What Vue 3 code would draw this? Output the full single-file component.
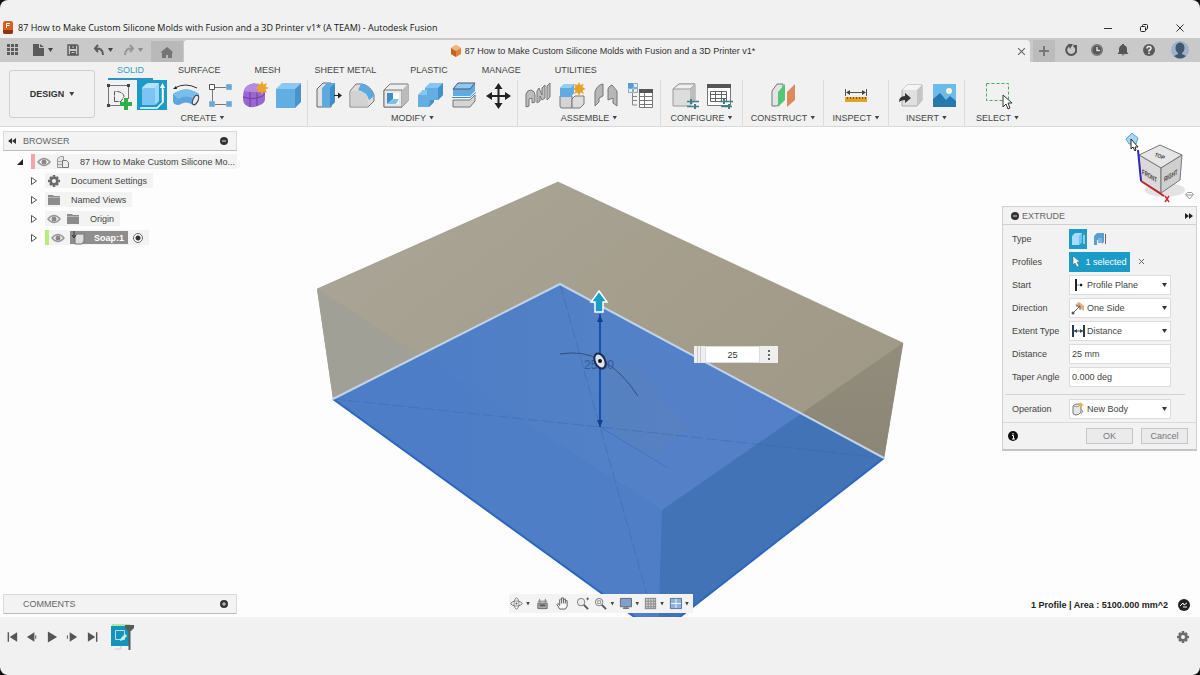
<script setup>
import { ref } from 'vue'

const tabs = ['SOLID', 'SURFACE', 'MESH', 'SHEET METAL', 'PLASTIC', 'MANAGE', 'UTILITIES']
const activeTab = ref('SOLID')

const box = (x, y, s, d, front, top, side) =>
  `<path d="M${x} ${y + d}l${d} ${-d}h${s}l${-d} ${d}z" fill="${top}"/><path d="M${x} ${y + d}h${s}v${s}h${-s}z" fill="${front}"/><path d="M${x + s} ${y + d}l${d} ${-d}v${s}l${-d} ${d}z" fill="${side}"/>`

const groups = [
  {
    id: 'create', label: 'CREATE', tools: [
      { name: 'Create Sketch', art: '<path d="M6 5.500h19M5.500 6v19M25.500 6v13M6 25.500h12" stroke="#777" fill="none"/><path d="M11.500 21.500V11.500h3q6 1 6.500 5l-3 5z" fill="none" stroke="#555" stroke-dasharray="5 1"/><g fill="#444"><path d="M4 4h3v3H4zM24 4h3v3h-3zM4 24h3v3H4z"/></g><path d="M21 18h4v4h4v4h-4v4h-4v-4h-4v-4h4z" fill="#2fae49"/>' },
      { name: 'Extrude', active: true, art: '<path d="M3 28h17l6-6V9" fill="none" stroke="#fff" stroke-width="1.500"/><path d="M5 9q0-2 2-3l2-2q2-1 4-1h9v18l-3 3q-1 1-3 1H5z" fill="#7cc4f4"/><path d="M5 9q0-2 2-3l2-2q2-1 4-1h9l-4 5H9q-3 0-4 1z" fill="#b6e2fb"/><path d="M18 8l4-5v18l-4 4z" fill="#9fd5f8"/><path d="M25.500 21V6" stroke="#fff" stroke-width="1.500"/><path d="M23 8l2.500-5L28 8z" fill="#fff"/>' },
      { name: 'Revolve', art: '<path d="M2 14q13-9 26 0v6q-3 7-6 5-7-5-14 0Q2 25 2 21z" fill="#5ba6dc"/><path d="M2 14q13-9 26 0l-5 5q-8-5-16 0z" fill="#79bdea"/><ellipse cx="24.500" cy="20" rx="2.500" ry="5" transform="rotate(25 24.500 20)" fill="#e8e8e8" stroke="#444"/><path d="M4 8q10-6 22 0" fill="none" stroke="#333"/><path d="M2 9l3-3 1 3z" fill="#222"/>' },
      { name: 'Rectangular Pattern', art: '<path d="M10 7.500h11M7.500 10v11M10 24.500h11" stroke="#777" fill="none"/><path d="M4.500 4.500h5v5h-5z" fill="#fff" stroke="#555"/><g fill="#63a9dc" stroke="#8fb4cf"><path d="M21.500 4.500h5v5h-5zM4.500 21.500h5v5h-5zM21.500 21.500h5v5h-5z"/></g>' },
      { name: 'Create Form', art: '<path d="M7 7q5-5 12-3 7 1 7 5v10q0 4-5 6-8 4-13 1-4-2-4-8 0-8 3-11z" fill="#9a67cf"/><path d="M7 7q5-5 12-3 5 1 6 4-2 3-7 4-9 0-13-1z" fill="#b58ae0"/><path d="M4 17q8 3 14 1 5-1 8-4M11 12v15M18 12v14" stroke="#6c3ca6" fill="none"/><path d="M23 1l1.500 3.500L28 3l-1.500 3.500L30 8l-3.500 1.500L28 13l-3.500-1.500L23 15l-1.500-3.500L18 13l1.500-3.500L16 8l3.500-1.500L18 3l3.500 1.500z" fill="#eba52d"/>' },
      { name: 'Derive', art: box(3, 3, 19, 6, '#62aee3', '#8cc9f0', '#4a92c8') },
    ],
  },
  {
    id: 'modify', label: 'MODIFY', tools: [
      { name: 'Press Pull', art: '<path d="M4 27V9l6-6h8v24z" fill="#e2e2e2" stroke="#666"/><path d="M9 27V8l5-5h8v19l-5 5z" fill="#5eaadf"/><path d="M17 27V8l5-5v19z" fill="#3f8dc4"/><path d="M21 15.500h6" stroke="#222"/><path d="M25 12.500l4 3-4 3z" fill="#222"/>' },
      { name: 'Fillet', art: '<path d="M3 27V11l6-7h6q9 2 12 11v6l-6 6z" fill="#dcdcdc" stroke="#777"/><path d="M14 4q9 0 13 12l-5 4Q20 12 11 10z" fill="#5ba9df"/><path d="M3.500 11h8q8 1 9.500 9v6.500H3.500z" fill="#d2d2d2"/>' },
      { name: 'Shell', art: '<path d="M3 10l6-6h18v17l-6 6H3z" fill="#eee" stroke="#777"/><path d="M3 10h18v17H3z" fill="#e8e8e8" stroke="#777"/><path d="M21 10l6-6v17l-6 6z" fill="#bbb"/><path d="M6 13h12v11H6z" fill="#fff"/><path d="M6 13h6v6l-6 5z" fill="#3f8dc4"/><path d="M12 19h6l-3 5H6z" fill="#7cc0ee"/>' },
      { name: 'Combine', art: '<path d="M10 8l5-5h13v12l-5 5h-4v2l-5 5H3V15l5-5h2z" fill="#64aee2"/><path d="M10 8l5-5h13l-5 5zM3 15l5-5h4v5z" fill="#86c6f0"/><path d="M23 8l5-5v12l-5 5zM15 20h4v2l-5 5z" fill="#4490c8"/>' },
      { name: 'Split Body', art: '<path d="M4 9l5-6h17v8l-5 5H4z" fill="#5fabe0"/><path d="M4 9l5-6h17l-5 6z" fill="#8ccaf2" stroke="#556"/><path d="M3 17.500h18l6-5" fill="none" stroke="#3d8fc9"/><path d="M4 20h17l5-5v6l-5 6H4z" fill="#d5d5d5" stroke="#777"/>' },
      { name: 'Move', art: '<path d="M15.500 6v20M5 16h21" stroke="#222" stroke-width="2"/><path d="M15.500 3l4 6h-8zM15.500 29l4-6h-8zM3 16l6-4v8zM28 16l-6-4v8z" fill="#222"/>' },
    ],
  },
  {
    id: 'assemble', label: 'ASSEMBLE', tools: [
      { name: 'Joint', art: '<g fill="#bdbdbd" stroke="#777"><path d="M3 27V14q1-4 5-4 4 1 4 5v7l-3 1v-5l-3 1v7z"/><path d="M14 23V11l2-3 3 7V8l3-3v13l-3 2-2-4v5z"/><path d="M24 20V6l3-3v14z"/></g>' },
      { name: 'New Component', art: '<path d="M3 16h12v12H5q-2 0-2-2z" fill="#d4d4d4" stroke="#777"/><path d="M15 19l3-3h9v8l-4 4h-8z" fill="#ddd" stroke="#777"/><path d="M3 8l4-4h10v9l-3 4H3z" fill="#60ace2"/><path d="M3 8l4-4h10l-3 4z" fill="#93cef3"/><path d="M22 2l1.500 3L27 4l-1.500 3 3 2-3 1.500L27 14l-3.500-1.500L22 16l-1.500-3.500L17 14l1.500-3.500L16 9l2.500-2L17 4l3.500 1z" fill="#e6a32c"/>' },
      { name: 'As-built Joint', art: '<g fill="#b7b7b7" stroke="#777"><path d="M4 26V12q2-7 8-8v12l-4 2v4z"/><path d="M17 20V9q1-3 4-4l5 6v15l-4-3v-5z"/></g>' },
      { name: 'Bill of Materials', art: '<path d="M3 3h5v5H3z" fill="#4f9fd8"/><path d="M8.500 3.500h4v4h-4zM3.500 8.500h4v4h-4zM8.500 8.500h4v4h-4z" fill="#dfeefa" stroke="#8ab"/><path d="M7.500 13v12H12M8 20.500h4M8 16.500h4" fill="none" stroke="#888"/><path d="M14.500 9.500h13v18h-13z" fill="#fff" stroke="#777"/><path d="M14 9h14v4H14z" fill="#555"/><path d="M14 16.500h14M14 20.500h14M14 24.500h14M19.500 13v14" stroke="#777"/>' },
    ],
  },
  {
    id: 'configure', label: 'CONFIGURE', tools: [
      { name: 'Configure', art: '<path d="M3 9l6-5h16v16l-5 6H3z" fill="#ddd" stroke="#999"/><path d="M3 9l6-5h16l-5 5z" fill="#f0f0f0" stroke="#999"/><path d="M20 9l5-5v16l-5 6z" fill="#bdbdbd"/><path d="M17 21.500h12M17 26.500h12" stroke="#3f7f86" stroke-width="1.500"/><path d="M21 19v5M25 24v5" stroke="#3f7f86" stroke-width="2"/>' },
      { name: 'Configuration Table', art: '<path d="M3.500 4.500h23v21h-23z" fill="#fff" stroke="#777"/><path d="M3 4h24v4H3z" fill="#555"/><path d="M6.500 11.500h16v10h-16zM6 14.500h17M6 18.500h17M11.500 11v11M17.500 11v11" fill="none" stroke="#666"/><path d="M16 21.500h13M17 26.500h11" stroke="#3f7f86" stroke-width="1.500"/><path d="M20 19v5M25 24v5" stroke="#3f7f86" stroke-width="2"/>' },
    ],
  },
  {
    id: 'construct', label: 'CONSTRUCT', tools: [
      { name: 'Offset Plane', art: '<path d="M4 26V11l5-7h6v15l-6 7z" fill="#e4e4e4" stroke="#777"/><path d="M10 27V12l7-8v16z" fill="#53c777"/><path d="M19 27V12l8-8v16z" fill="#dc8a5b"/>' },
    ],
  },
  {
    id: 'inspect', label: 'INSPECT', tools: [
      { name: 'Measure', art: '<path d="M4.500 9v7M25.500 9v7M6 12.500h18" stroke="#555" fill="none"/><path d="M5 12.500l4-2.500v5zM25 12.500l-4-2.500v5z" fill="#444"/><path d="M4 17h22v5H4z" fill="#dda429"/><path d="M6.500 17v2M9.500 17v2M12.500 17v2M15.500 17v2M18.500 17v2M21.500 17v2M24.500 17v2" stroke="#7a5a14"/>' },
    ],
  },
  {
    id: 'insert', label: 'INSERT', tools: [
      { name: 'Insert Derive', art: '<path d="M7 10l5-5h15v15l-5 6H7z" fill="#e0e0e0" stroke="#aaa"/><path d="M7 10l5-5h15l-5 5z" fill="#f4f4f4"/><path d="M22 10l5-5v15l-5 6z" fill="#c5c5c5"/><path d="M4 22q0-6 6-6v-3l6 5-6 5v-3q-4 0-6 2z" fill="#333"/>' },
      { name: 'Decal', art: '<path d="M4 4h23v23H4z" fill="#6dbbea"/><circle cx="20" cy="11" r="3" fill="#fff6d6"/><path d="M4 19l7-6 6 7 4-4 6 5v6H4z" fill="#2779ab"/>' },
    ],
  },
  {
    id: 'select', label: 'SELECT', tools: [
      { name: 'Select', art: '<path d="M3.500 3.500h22v17h-22z" fill="none" stroke="#4fa563" stroke-dasharray="3 2"/><path d="M20 15v12l3-3 2 5 2-1-2-5h4z" fill="#fff" stroke="#333"/>' },
    ],
  },
]

const eye = '<path d="M1 7q6-7 12 0-6 7-12 0z" fill="none" stroke="#999" stroke-width="1.500"/><circle cx="7" cy="7" r="2.500" fill="#888"/>'
const folder = '<path d="M1 2h5l1 1h6v9H1z" fill="#8c8c8c"/><path d="M1 4.500h12" stroke="#b5b5b5"/>'
const gear = '<path d="M7 1v12M1 7h12M3 3l8 8M11 3l-8 8" stroke="#6c6c6c" stroke-width="2.500"/><circle cx="7" cy="7" r="4.500" fill="#6c6c6c"/><circle cx="7" cy="7" r="2" fill="#f3f3f3"/>'
const tree = [
  { label: 'Document Settings', icons: [gear] },
  { label: 'Named Views', icons: [folder] },
  { label: 'Origin', icons: [eye, folder] },
]

const start = ref('Profile Plane')
const direction = ref('One Side')
const extent = ref('Distance')
const distance = ref('25 mm')
const taper = ref('0.000 deg')
const operation = ref('New Body')
const offset = ref('25')

const transport = [
  { name: 'Go to start', art: '<path d="M2.500 2v10" stroke="#555" stroke-width="1.500"/><path d="M12 2v10L4 7z" fill="#555"/>' },
  { name: 'Step back', art: '<path d="M9 2v10L1 7z" fill="#555"/><path d="M10 5h1v4h-1z" fill="#555"/>' },
  { name: 'Play', art: '<path d="M2 1v12l10-6z" fill="#555"/>' },
  { name: 'Step forward', art: '<path d="M4 2v10l8-5z" fill="#555"/><path d="M1 5h1v4H1z" fill="#555"/>' },
  { name: 'Go to end', art: '<path d="M2 2v10l8-5z" fill="#555"/><path d="M11.500 2v10" stroke="#555" stroke-width="1.500"/>' },
]

const nav = [
  { name: 'Orbit', caret: true, art: '<ellipse cx="7" cy="7" rx="6" ry="2.500" fill="none" stroke="#666"/><ellipse cx="7" cy="7" rx="2.500" ry="6" fill="none" stroke="#777"/><path d="M5 5h4v4H5z" fill="#f4f4f4"/><path d="M7 6v2M6 7h2" stroke="#555"/>' },
  { name: 'Look At', art: '<path d="M2 6.500h10v6H2z" fill="#aaa" stroke="#666"/><path d="M4 9h6" stroke="#555" stroke-width="2"/><path d="M2 4.500h10M4 2v4M10 2v4" stroke="#777" fill="none"/>' },
  { name: 'Pan', art: '<path d="M4 13L1 8l1-1 2 2V3l1-1 1 1V1h2v2l2-1v2h2v6l-2 3z" fill="#fafafa" stroke="#555"/><path d="M6 3v4M8 3v4M10 4v3" stroke="#555"/>' },
  { name: 'Zoom', art: '<circle cx="5.500" cy="5.500" r="4" fill="#eee" stroke="#777"/><path d="M8.500 8.500l4.500 4.500" stroke="#555" stroke-width="2"/><path d="M11 2h3M12.500 .5v3" stroke="#555"/>' },
  { name: 'Fit', caret: true, art: '<circle cx="5.500" cy="5.500" r="4" fill="#eee" stroke="#777"/><path d="M4 4h3v3H4z" fill="none" stroke="#999"/><path d="M8.500 8.500l4.500 4.500" stroke="#555" stroke-width="2"/>' },
  { name: 'Display Settings', caret: true, art: '<path d="M1.500 1.500h12v9h-12z" fill="#7e9fd0" stroke="#666"/><path d="M5 11h5l1 2H4z" fill="#777"/>' },
  { name: 'Grid and Snaps', caret: true, art: '<path d="M1 1h12v12H1z" fill="#d5d5d5"/><path d="M1 1.500h12M1 4.500h12M1 7.500h12M1 10.500h12M1.500 1v12M4.500 1v12M7.500 1v12M10.500 1v12M12.500 1v12M1 12.500h12" stroke="#888"/>' },
  { name: 'Viewports', caret: true, art: '<path d="M1.500 1.500h12v11h-12z" fill="#8fb0dc" stroke="#556f99"/><path d="M7.500 2v10M2 7h11" stroke="#f4f7fb"/>' },
]
</script>

<template>
  <div class="window">
    <header class="titlebar">
      <svg class="app-icon" viewBox="0 0 10 13"><rect width="10" height="13" rx="2" fill="#d9601c" /><path d="M0 9h10v2q0 2-2 2H2q-2 0-2-2z" fill="#8d3510" /><path d="M3.500 7V2.500H7M3.500 4.500h3" stroke="#fff" fill="none" /></svg>
      <h1>87 How to Make Custom Silicone Molds with Fusion and a 3D Printer v1* (A TEAM) - Autodesk Fusion</h1>
      <div class="window-buttons">
        <button aria-label="Minimize"><svg viewBox="0 0 10 10"><path d="M1 5.500h8" stroke="#333" /></svg></button>
        <button aria-label="Restore"><svg viewBox="0 0 10 10"><rect x="1.500" y="3.500" width="5" height="5" rx="1" fill="none" stroke="#222" /><path d="M3.500 3.500v-1q0-1 1-1h3q1 0 1 1v3q0 1-2 1" fill="none" stroke="#222" /></svg></button>
        <button aria-label="Close"><svg viewBox="0 0 10 10"><path d="M1.500 1.500l7 7M8.500 1.500l-7 7" stroke="#333" /></svg></button>
      </div>
    </header>

    <nav class="tabbar">
      <div class="quick">
        <button aria-label="Data panel"><svg viewBox="0 0 12 12"><path d="M0 0h3v3H0zM4 0h3v3H4zM8 0h3v3H8zM0 4h3v3H0zM4 4h3v3H4zM8 4h3v3H8zM0 8h3v3H0zM4 8h3v3H4zM8 8h3v3H8z" fill="#5c5c5c" /></svg></button>
        <button aria-label="File"><svg viewBox="0 0 12 12"><path d="M0 0h6v4h5v8H0z" fill="#5a5a5a" /><path d="M7 0l4 3H7z" fill="#5a5a5a" /></svg><i class="caret"></i></button>
        <button aria-label="Save"><svg viewBox="0 0 12 12"><path d="M1 1h9l1 1v9H1z" fill="none" stroke="#5a5a5a" stroke-width="1.500" /><path d="M3 1h6v4H3zM3 7h6v4H3z" fill="#5a5a5a" /><path d="M4.500 8.500h3M5 3h2" stroke="#ccc" /></svg></button>
        <button class="undo" aria-label="Undo"><svg viewBox="0 0 12 12"><path d="M5 1L2 4.500 5 8M2 4.500q8-1 8 6.500" fill="none" stroke="#5c5c5c" stroke-width="2" /></svg><i class="caret"></i></button>
        <button class="muted" aria-label="Redo"><svg viewBox="0 0 12 12"><path d="M7 1l3 3.500L7 8M10 4.500q-8-1-8 6.500" fill="none" stroke="#5c5c5c" stroke-width="2" /></svg><i class="caret"></i></button>
      </div>
      <button class="home" aria-label="Home"><svg viewBox="0 0 12 12"><path d="M0 6l6-5 6 5-1 1v5H7V9H5v3H1V7z" fill="#757575" /></svg></button>
      <div class="doc-tab">
        <span class="doc-name">
          <svg viewBox="0 0 12 12"><path d="M1 3l5-3 5 3v6l-5 3-5-3z" fill="#e08438" /><path d="M1 3l5 3v6l-5-3z" fill="#c9621f" /><path d="M1 3l5-3 5 3-5 3z" fill="#f5b47a" /></svg>
          87 How to Make Custom Silicone Molds with Fusion and a 3D Printer v1*
        </span>
        <button aria-label="Close document"><svg viewBox="0 0 8 8"><path d="M1 1l6 6M7 1L1 7" stroke="#666" /></svg></button>
      </div>
      <div class="account">
        <button class="new" aria-label="New tab"><svg viewBox="0 0 12 12"><path d="M6 1v10M1 6h10" stroke="#777" stroke-width="2" /></svg></button>
        <button aria-label="Extensions"><svg viewBox="0 0 12 12"><path d="M4 1.500A5 5 0 108.500 1.500" fill="none" stroke="#555" stroke-width="2" /><path d="M3 0h5L5 5zM9 1h3v4z" fill="#555" /></svg></button>
        <button aria-label="Job status"><svg viewBox="0 0 12 12"><circle cx="6" cy="6" r="5" fill="#555" stroke="#777" stroke-width="2" /><path d="M6 3v3.500h3" fill="none" stroke="#ddd" stroke-width="1.500" /></svg></button>
        <button aria-label="Notifications"><svg viewBox="0 0 12 12"><path d="M5 0h2v1q3 1 3 4v3l1.500 2h-11L2 8V5q0-3 3-4zM4.500 10.500h3q-1.500 2-3 0z" fill="#555" /></svg></button>
        <button aria-label="Help"><svg viewBox="0 0 12 12"><circle cx="6" cy="6" r="6" fill="#5a5a5a" /><path d="M4 4.500q0-2 2-2t2 2q0 1-2 2v1" fill="none" stroke="#eee" stroke-width="1.500" /><path d="M5.200 8.500h1.600v1.500H5.200z" fill="#eee" /></svg></button>
        <button class="avatar" aria-label="Profile"><svg viewBox="0 0 18 18"><circle cx="9" cy="9" r="9" fill="#9fb2cb" /><ellipse cx="9" cy="7" rx="4.500" ry="5.500" fill="#43566f" /><path d="M7 11h4v2l4 2q-6 5-12 0l4-2z" fill="#43566f" /></svg></button>
      </div>
    </nav>

    <section class="ribbon">
      <button class="workspace">DESIGN <i class="caret"></i></button>
      <div class="ribbon-main">
        <div class="ribbon-tabs" role="tablist">
          <button v-for="t in tabs" :key="t" role="tab" :aria-selected="t === activeTab" :class="{ on: t === activeTab }" @click="activeTab = t">{{ t }}</button>
        </div>
        <div class="groups">
          <div v-for="g in groups" :key="g.id" :class="['group', g.id]">
            <div class="tools">
              <button v-for="tool in g.tools" :key="tool.name" :aria-label="tool.name" :class="{ active: tool.active }"><svg viewBox="0 0 30 30" v-html="tool.art"></svg></button>
            </div>
            <button class="group-label">{{ g.label }} <i class="caret"></i></button>
          </div>
        </div>
      </div>
    </section>

    <main class="canvas">
      <svg class="scene" viewBox="0 127 1200 490" preserveAspectRatio="xMidYMid slice">
        <defs>
          <linearGradient id="lid" x1="0" y1="0" x2="1" y2="1"><stop offset="0" stop-color="#aaa698" /><stop offset=".4" stop-color="#a59e8d" /><stop offset="1" stop-color="#9b9482" /></linearGradient>
          <linearGradient id="end" x1="0" y1="0" x2="0" y2="1"><stop offset="0" stop-color="#928c7c" /><stop offset="1" stop-color="#837d6e" /></linearGradient>
          <linearGradient id="base" x1="0" y1="0" x2="1" y2="0"><stop offset="0" stop-color="#4b7cc5" /><stop offset=".5" stop-color="#5381c7" /><stop offset="1" stop-color="#557fca" /></linearGradient>
          <clipPath id="floor"><path d="M333 399L560 284l324 174-226 176z" /></clipPath>
        </defs>
        <path d="M317 289L558 182l345 161-19 115-226 176-325-235z" fill="url(#lid)" />
        <path d="M317 289l344 222-3 123-325-235z" fill="#a1a096" />
        <path d="M903 343l-19 115-226 176 4-124z" fill="url(#end)" />
        <path d="M333 399L560 284l324 174-226 176z" fill="url(#base)" />
        <g clip-path="url(#floor)">
          <path d="M317 289l345 221-3 130-330-238z" fill="#4d7dc5" opacity=".75" />
          <path d="M903 343L662 510l-4 130 226-176z" fill="#4273b7" />
          <path d="M604 370l30-10 28 35v60l-28-8-30-25zM662 400l28 28-28 20z" fill="#6684a8" opacity=".2" />
        </g>
        <g fill="none" stroke="#3864a8" opacity=".45">
          <path d="M333 399l267 28 284 31M560 284l40 143 58 207" stroke-dasharray="12 3" />
          <path d="M600 427l68 41" />
        </g>
        <path d="M333 399l325 235 226-176" fill="none" stroke="#2d67bd" stroke-width="2" />
        <path d="M333 399L560 284l324 174" fill="none" stroke="#c0d3e8" stroke-width="2" />
        <path d="M317 289L558 182l345 161-19 114" fill="none" stroke="#8f8979" opacity=".5" />
        <text x="584" y="369" font-size="12" fill="#365b96">25.00</text>
        <path d="M600 314v113" stroke="#184fae" stroke-width="2" />
        <path d="M597 322l3-7 3 7zM597 420l3 7 3-7z" fill="#143f8e" />
        <path d="M560 354q45-8 78 42" fill="none" stroke="#334e7b" />
        <ellipse cx="600" cy="361" rx="5" ry="8" transform="rotate(-25 600 361)" fill="#dde4ef" stroke="#1d2c4a" stroke-width="2" />
        <circle cx="600" cy="361" r="2" fill="#111" />
        <path d="M599 291l8 11h-4v10h-8v-10h-4z" fill="#199fc7" stroke="#fff" stroke-width="1.500" />
      </svg>

      <div class="offset-box">
        <span class="grip"></span>
        <input v-model="offset" aria-label="Extrude distance" />
        <button aria-label="More options"><svg viewBox="0 0 4 14"><path d="M1 2h2v2H1zM1 6h2v2H1zM1 10h2v2H1z" fill="#666" /></svg></button>
      </div>

      <aside class="browser">
        <div class="bar">
          <svg viewBox="0 0 10 8"><path d="M5 1v6L1 4zM9 1v6L5 4z" fill="#333" /></svg>
          <span>BROWSER</span>
          <button aria-label="Collapse browser"><svg viewBox="0 0 8 8"><circle cx="4" cy="4" r="4" fill="#333" /><path d="M2 4h4" stroke="#ddd" /></svg></button>
        </div>
        <ul class="tree">
          <li class="root">
            <svg class="twist" viewBox="0 0 8 8"><path d="M7 1v6H1z" fill="#222" /></svg>
            <span class="chip">
              <i class="stripe pink"></i>
              <svg viewBox="0 0 14 14" v-html="eye"></svg>
              <svg viewBox="0 0 14 14"><path d="M1.500 12.500v-9l3-2h3v11z" fill="#e4e4e4" stroke="#999" /><path d="M2 6.500h5M2 9.500h5" stroke="#aaa" /><path d="M6.500 5.500h4l2 2v5h-6z" fill="#eee" stroke="#777" /></svg>
              <span>87 How to Make Custom Silicone Mo...</span>
            </span>
          </li>
          <li v-for="n in tree" :key="n.label">
            <svg class="twist" viewBox="0 0 8 8"><path d="M1.500 .5v7l5-3.500z" fill="#fff" stroke="#555" /></svg>
            <span class="chip">
              <svg v-for="(art, i) in n.icons" :key="i" viewBox="0 0 14 14" v-html="art"></svg>
              <span>{{ n.label }}</span>
            </span>
          </li>
          <li>
            <svg class="twist" viewBox="0 0 8 8"><path d="M1.500 .5v7l5-3.500z" fill="#fff" stroke="#555" /></svg>
            <span class="chip soap">
              <i class="stripe green"></i>
              <svg viewBox="0 0 14 14" v-html="eye"></svg>
              <label for="soap"><svg viewBox="0 0 14 14"><path d="M4 5l2-2h7v7l-2 3H4z" fill="#ddd" stroke="#777" /><path d="M3 0v6M1 4l2 3 2-3" stroke="#333" fill="none" /></svg><b>Soap:1</b></label>
              <input id="soap" type="radio" checked />
            </span>
          </li>
        </ul>
      </aside>

      <svg class="viewcube" viewBox="1120 130 80 76">
        <ellipse cx="1165" cy="190" rx="20" ry="7" fill="#e3e3e3" />
        <path d="M1139 155l21-10 22 10-21 13z" fill="#e6e6e6" stroke="#777" />
        <path d="M1139 155l22 13v25l-20-12z" fill="#d9d9d9" stroke="#777" />
        <path d="M1182 155l-21 13v25l19-13z" fill="#cfcfcf" stroke="#777" />
        <g font-weight="700" fill="#444">
          <text transform="matrix(.8 .3 -.4 .8 1154 156)" font-size="6">TOP</text>
          <text transform="matrix(.72 .42 0 1.200 1142 174)" font-size="6">FRONT</text>
          <text transform="matrix(.72 -.42 0 1.200 1164 182)" font-size="6">RIGHT</text>
        </g>
        <path d="M1138 150l3 31" stroke="#3029b5" stroke-width="2" />
        <path d="M1141 181l23 15" stroke="#c8202d" stroke-width="2" />
        <path d="M1165 196l4 6M1169 196l-4 6" stroke="#d02c38" stroke-width="1.500" />
        <path d="M1132 133l6 5-2 6h-7l-3-5z" fill="#a7d5ef" stroke="#5ba7d0" />
        <path d="M1131 139v10l2-2 2 4 1-1-1-3h3z" fill="#fff" stroke="#222" />
        <path d="M1185.500 194.500l2-2h4l2 2-4 4.500z" fill="#f8f8f8" stroke="#999" /><path d="M1186 195h7" stroke="#999" />
      </svg>

      <form class="extrude" @submit.prevent>
        <div class="panel-head">
          <svg viewBox="0 0 8 8"><circle cx="4" cy="4" r="4" fill="#333" /><path d="M2 4h4" stroke="#ddd" /></svg>
          <span>EXTRUDE</span>
          <svg class="ff" viewBox="0 0 10 8"><path d="M1 1v6l4-3zM5 1v6l4-3z" fill="#222" /></svg>
        </div>
        <div class="fields">
          <span>Type</span>
          <div class="types">
            <button type="button" class="on" aria-label="Extrude"><svg viewBox="0 0 14 14"><path d="M1 4l3-3h7v9l-3 3H1z" fill="#a8dcfa" /><path d="M8 4l3-3v9l-3 3z" fill="#6fc0ee" /><path d="M13 12V3" stroke="#fff" /></svg></button>
            <button type="button" aria-label="Thin extrude"><svg viewBox="0 0 14 14"><path d="M1 4l3-3h7v9l-2 2V8H4v5H1z" fill="#5c9ed0" /><path d="M5 6h4v5H5z" fill="#7fb4dc" /><path d="M12.500 12V2" stroke="#666" /></svg></button>
          </div>
          <span>Profiles</span>
          <div class="profiles">
            <button type="button" class="selected"><svg viewBox="0 0 8 12"><path d="M1 0v9l2-2 2 4 2-1-2-4h3z" fill="#fff" stroke="#456" stroke-width=".5" /></svg>1 selected</button>
            <button type="button" class="clear" aria-label="Clear selection"><svg viewBox="0 0 8 8"><path d="M1 1l5 5M6 1L1 6" stroke="#666" /></svg></button>
          </div>
          <label for="start">Start</label>
          <div class="pick"><svg viewBox="0 0 14 14"><path d="M5 1v12" stroke="#222" stroke-width="2" /><path d="M9 6h2v2H9zM6 7h2" fill="#222" stroke="#222" stroke-width=".5" /></svg><select id="start" v-model="start"><option>Profile Plane</option></select></div>
          <label for="direction">Direction</label>
          <div class="pick"><svg viewBox="0 0 14 14"><path d="M4 4l4-3 5 4v5l-4-3z" fill="#e6aa7c" /><path d="M2 12l7-7M9 5H5M9 5v4" stroke="#666" fill="none" /><circle cx="2" cy="12" r="1.500" fill="#555" /></svg><select id="direction" v-model="direction"><option>One Side</option></select></div>
          <label for="extent">Extent Type</label>
          <div class="pick"><svg viewBox="0 0 14 14"><path d="M2 1v12M13 1v12" stroke="#2a3a4a" stroke-width="2" /><path d="M3 7h9" stroke="#345" /><path d="M3 7l3-2v4zM12 7L9 5v4z" fill="#345" /></svg><select id="extent" v-model="extent"><option>Distance</option></select></div>
          <label for="distance">Distance</label>
          <input id="distance" v-model="distance" />
          <label for="taper">Taper Angle</label>
          <input id="taper" v-model="taper" />
        </div>
        <hr />
        <div class="fields last">
          <label for="operation">Operation</label>
          <div class="pick"><svg viewBox="0 0 14 14"><path d="M2 4q1-2 5-2h3v8q-2 3-5 3t-3-2z" fill="#e6e6e6" stroke="#777" /><path d="M2 4q4 2 8-1M10 8l2 1-2 3" fill="none" stroke="#999" /><path d="M10 0l1 2 2 1-2 1-1 2-1-2-2-1 2-1z" fill="#e6b43c" /></svg><select id="operation" v-model="operation"><option>New Body</option></select></div>
        </div>
        <div class="actions">
          <svg viewBox="0 0 10 10"><circle cx="5" cy="5" r="5" fill="#111" /><path d="M4 4.500h1.500V8M4 8h3M5 2v1.500" stroke="#fff" fill="none" /></svg>
          <button type="submit">OK</button>
          <button type="button">Cancel</button>
        </div>
      </form>

      <div class="bar comments">
        <span>COMMENTS</span>
        <button aria-label="Add comment"><svg viewBox="0 0 8 8"><circle cx="4" cy="4" r="4" fill="#333" /><path d="M2 4h4M4 2v4" stroke="#ddd" /></svg></button>
      </div>

      <div class="navbar">
        <button v-for="n in nav" :key="n.name" :aria-label="n.name" :class="{ plain: !n.caret }"><svg viewBox="0 0 14 14" v-html="n.art"></svg><i v-if="n.caret" class="caret"></i></button>
      </div>

      <div class="status">
        <strong>1 Profile | Area : 5100.000 mm^2</strong>
        <svg viewBox="0 0 12 12"><circle cx="6" cy="6" r="6" fill="#222" /><path d="M2 7l3-3 1 2 3-2M5 8h4" stroke="#fff" fill="none" /></svg>
      </div>
    </main>

    <footer class="timeline">
      <div class="transport">
        <button v-for="t in transport" :key="t.name" :aria-label="t.name"><svg viewBox="0 0 14 14" v-html="t.art"></svg></button>
      </div>
      <button class="feature" aria-label="Sketch feature"><svg viewBox="0 0 26 28"><path d="M2 1h18v6H2z" fill="#a9eca0" /><path d="M1 3h18v20H1z" fill="#1593bd" /><path d="M5.500 7.500h9v9h-9z" fill="none" stroke="#a8e2f4" /><path d="M10 18l1-3 4-4 2 2-4 4z" fill="#c8f0dc" /><path d="M5 26h6v-3" fill="none" stroke="#ccc" /><path d="M15 2h9v3l-3 3h-3l-3-3z" fill="#5a5a5a" /><path d="M19.500 6v21" stroke="#5a5a5a" stroke-width="2" /></svg></button>
      <button class="settings" aria-label="Timeline settings"><svg viewBox="0 0 14 14" v-html="gear"></svg></button>
    </footer>
  </div>
</template>

<style>
body {
  background: #111;
}
</style>

<style scoped>
.window {
  display: flex;
  flex-direction: column;
  min-height: 100vh;
  overflow: hidden;
  border-radius: 8px;
  background: #f1f1f1;
  color: #444;
  font: 9px/12px "Liberation Sans", Arial, sans-serif;
}
.window * {
  box-sizing: border-box;
}
button {
  display: flex;
  align-items: center;
  justify-content: center;
  padding: 0;
  border: 0;
  background: none;
  color: inherit;
  font: inherit;
}
svg {
  display: block;
  flex: none;
}
.caret {
  flex: none;
  width: 5px;
  height: 4px;
  background: #444;
  clip-path: polygon(0 0, 100% 0, 50% 100%);
}

.titlebar {
  display: flex;
  align-items: center;
  height: 38px;
  padding: 17px 15px 0 3px;
}
.app-icon {
  width: 10px;
  height: 13px;
}
.titlebar h1 {
  flex: 1;
  margin: 0 0 0 5px;
  color: #111;
  font: 9px/14px "Open Sans", sans-serif;
}
.window-buttons {
  display: flex;
  gap: 26px;
}
.window-buttons svg {
  width: 10px;
  height: 10px;
}

.tabbar {
  display: flex;
  align-items: flex-end;
  height: 24px;
  background: #c9c9c9;
}
.quick {
  display: flex;
  gap: 14px;
  width: 151px;
  height: 24px;
  padding-left: 7px;
}
.quick button {
  gap: 3px;
}
.quick svg,
.home svg,
.account svg {
  width: 12px;
  height: 12px;
}
.quick .undo {
  margin-right: -4px;
}
.muted {
  opacity: .45;
}
.home {
  width: 32px;
  height: 21px;
  background: #b9b9b9;
}
.doc-tab {
  flex: 1;
  display: flex;
  align-items: center;
  height: 22px;
  margin-left: 1px;
  padding: 0 4px;
  border-radius: 3px 4px 0 0;
  background: #f1f1f1;
}
.doc-name {
  flex: 1;
  display: flex;
  align-items: center;
  justify-content: center;
  gap: 3px;
  color: #333;
}
.doc-name svg {
  width: 12px;
  height: 12px;
}
.doc-tab button svg {
  width: 9px;
  height: 9px;
}
.account {
  display: flex;
  align-items: center;
  gap: 14px;
  height: 22px;
  padding: 0 11px 2px 3px;
}
.account .new {
  width: 22px;
  height: 22px;
  margin: 0 -4px -2px 0;
  background: #bcbcbc;
}
.account .avatar {
  margin-left: 2px;
}
.account .avatar svg {
  width: 18px;
  height: 18px;
}

.ribbon {
  display: flex;
  align-items: flex-start;
  height: 65px;
  border-bottom: 1px solid #d9d9d9;
}
.workspace {
  gap: 5px;
  width: 86px;
  height: 48px;
  margin: 8px 3px 0 9px;
  border: 1px solid #cfcfcf;
  border-radius: 3px;
  color: #333;
  font-weight: 700;
}
.ribbon-main {
  flex: 1;
}
.ribbon-tabs {
  display: flex;
  gap: 16px;
  height: 18px;
  padding-left: 10px;
}
.ribbon-tabs button {
  padding: 0 9px;
  border-bottom: 2px solid transparent;
}
.ribbon-tabs .on {
  border-color: #2b93bd;
  color: #2f9fc9;
}
.groups {
  display: flex;
}
.group {
  display: flex;
  flex-direction: column;
  align-items: center;
  padding-bottom: 2px;
  border-right: 1px solid #dcdcdc;
}
.create,
.modify {
  width: 210px;
}
.assemble {
  width: 143px;
}
.configure {
  width: 82px;
}
.construct {
  width: 81px;
}
.inspect {
  width: 65px;
}
.insert {
  width: 76px;
}
.select {
  width: 65px;
  border: 0;
}
.tools {
  display: flex;
  gap: 4px;
}
.tools svg {
  width: 30px;
  height: 30px;
}
.tools .active {
  background: #1b9bc8;
}
.group-label {
  gap: 3px;
  height: 15px;
}

.canvas {
  position: relative;
  flex: 1;
  overflow: hidden;
  background: #fdfdfd;
}
.scene {
  position: absolute;
  width: 100%;
  height: 100%;
}
.offset-box {
  position: absolute;
  left: calc(50% + 94px);
  top: calc(50% - 26px);
  display: flex;
  width: 84px;
  height: 17px;
  background: #efefef;
}
.grip {
  width: 11px;
  border: 3px solid #efefef;
  border-width: 0 3px;
  background: repeating-linear-gradient(90deg, #ccc 0 1px, #eee 1px 3px);
}
.offset-box input {
  width: 55px;
  border: 1px solid #ddd;
  background: #fff;
  color: #333;
  font: inherit;
  text-align: center;
}
.offset-box button {
  flex: 1;
}
.offset-box svg {
  width: 4px;
  height: 14px;
}

.bar {
  display: flex;
  align-items: center;
  height: 20px;
  padding: 0 8px 0 3px;
  border: 1px solid #dadada;
  border-bottom-color: #bbb;
  background: #f3f3f3;
  color: #666;
}
.bar span {
  flex: 1;
}
.bar > svg {
  width: 10px;
  height: 8px;
  margin-right: 6px;
}
.bar button svg {
  width: 8px;
  height: 8px;
}
.browser {
  position: absolute;
  left: 3px;
  top: 4px;
  width: 234px;
}
.tree {
  margin: 1px 0 0;
  padding: 0;
  list-style: none;
}
.tree li {
  display: flex;
  align-items: center;
  gap: 7px;
  height: 19px;
  padding-left: 27px;
}
.tree .root {
  padding-left: 13px;
}
.twist {
  width: 8px;
  height: 8px;
}
.chip {
  display: flex;
  align-items: center;
  gap: 5px;
  height: 15px;
  padding: 0 6px 0 2px;
  background: #f3f3f3;
}
.root .chip {
  padding-right: 2px;
}
.chip > span {
  margin-left: 5px;
  white-space: nowrap;
}
.chip svg {
  width: 14px;
  height: 14px;
}
.stripe {
  width: 4px;
  height: 15px;
  margin: 0 -3px 0 -2px;
}
.pink {
  background: #f0a4ac;
}
.green {
  background: #b9ed7a;
}
.soap label {
  display: flex;
  align-items: center;
  gap: 9px;
  height: 13px;
  padding: 0 4px 0 1px;
  background: #8e8e8e;
  color: #fff;
}
.soap input {
  appearance: none;
  width: 10px;
  height: 10px;
  margin: 0;
  border: 1px solid #666;
  border-radius: 50%;
  background: radial-gradient(circle, #333 0 2px, #fff 3px);
}

.viewcube {
  position: absolute;
  right: 0;
  top: 3px;
  width: 80px;
  height: 76px;
}

.extrude {
  position: absolute;
  right: 3px;
  top: 79px;
  width: 195px;
  border: 1px solid #d0d0d0;
  border-bottom: 2px solid #c4c4c4;
  background: #f2f2f2;
}
.panel-head {
  display: flex;
  align-items: center;
  gap: 3px;
  height: 18px;
  padding: 0 2px 0 8px;
  border-bottom: 1px solid #d0d0d0;
  color: #666;
}
.panel-head span {
  flex: 1;
}
.panel-head svg {
  width: 8px;
  height: 8px;
}
.panel-head .ff {
  width: 10px;
}
.fields {
  display: grid;
  grid-template-columns: 57px 102px;
  grid-auto-rows: 20px;
  row-gap: 3px;
  align-items: center;
  padding: 4px 0 0 9px;
  white-space: nowrap;
}
.types,
.profiles {
  display: flex;
  height: 20px;
  gap: 4px;
}
.types button {
  width: 18px;
}
.types svg {
  width: 14px;
  height: 14px;
}
.types .on,
.selected {
  background: #1b9bc8;
  color: #fff;
}
.selected {
  gap: 5px;
  width: 61px;
}
.selected svg {
  width: 8px;
  height: 12px;
}
.clear {
  width: 16px;
}
.clear svg {
  width: 8px;
  height: 8px;
}
.fields input,
.pick {
  width: 102px;
  height: 20px;
  border: 1px solid #dcdcdc;
  background: #fff;
  color: #444;
  font: inherit;
}
.fields input {
  padding: 0 2px;
}
.pick {
  position: relative;
}
.pick svg {
  position: absolute;
  left: 1px;
  top: 2px;
  width: 14px;
  height: 14px;
}
.pick::after {
  content: "";
  position: absolute;
  right: 3px;
  top: 7px;
  width: 5px;
  height: 4px;
  background: #333;
  clip-path: polygon(0 0, 100% 0, 50% 100%);
  pointer-events: none;
}
.pick select {
  appearance: none;
  width: 100%;
  height: 100%;
  padding: 0 12px 0 17px;
  border: 0;
  background: none;
  color: inherit;
  font: inherit;
}
.extrude hr {
  margin: 7px 11px 0 2px;
  border: 0;
  border-top: 1px solid #d2d2d2;
}
.actions {
  display: flex;
  align-items: center;
  gap: 8px;
  height: 27px;
  margin-top: 3px;
  padding: 0 8px 0 5px;
  border-top: 1px solid #dadada;
  color: #777;
}
.actions svg {
  width: 10px;
  height: 10px;
  margin-right: auto;
}
.actions button {
  width: 47px;
  height: 16px;
  border: 1px solid #c6c6c6;
  background: #ebebeb;
}

.comments {
  position: absolute;
  left: 3px;
  bottom: 3px;
  width: 234px;
  padding-left: 19px;
}
.navbar {
  position: absolute;
  left: calc(50% - 91px);
  bottom: 4px;
  display: flex;
  align-items: center;
  justify-content: space-between;
  width: 184px;
  height: 19px;
  padding: 0 4px 0 1px;
  background: #f3f3f3;
}
.navbar button {
  gap: 3px;
}
.navbar .plain {
  padding: 0 1px;
}
.navbar svg {
  width: 13px;
  height: 13px;
}
.navbar .caret {
  width: 4px;
}
.status {
  position: absolute;
  right: 10px;
  bottom: 6px;
  display: flex;
  align-items: center;
  gap: 10px;
  color: #222;
}
.status svg {
  width: 12px;
  height: 12px;
}

.timeline {
  display: flex;
  align-items: flex-start;
  height: 58px;
  padding: 6px 10px 0 6px;
}
.transport {
  display: flex;
  align-items: center;
  gap: 7px;
  height: 27px;
}
.transport svg {
  width: 13px;
  height: 14px;
}
.feature {
  margin-left: 11px;
}
.feature svg {
  width: 26px;
  height: 28px;
}
.settings {
  height: 27px;
  margin-left: auto;
}
.settings svg {
  width: 14px;
  height: 14px;
}
</style>
